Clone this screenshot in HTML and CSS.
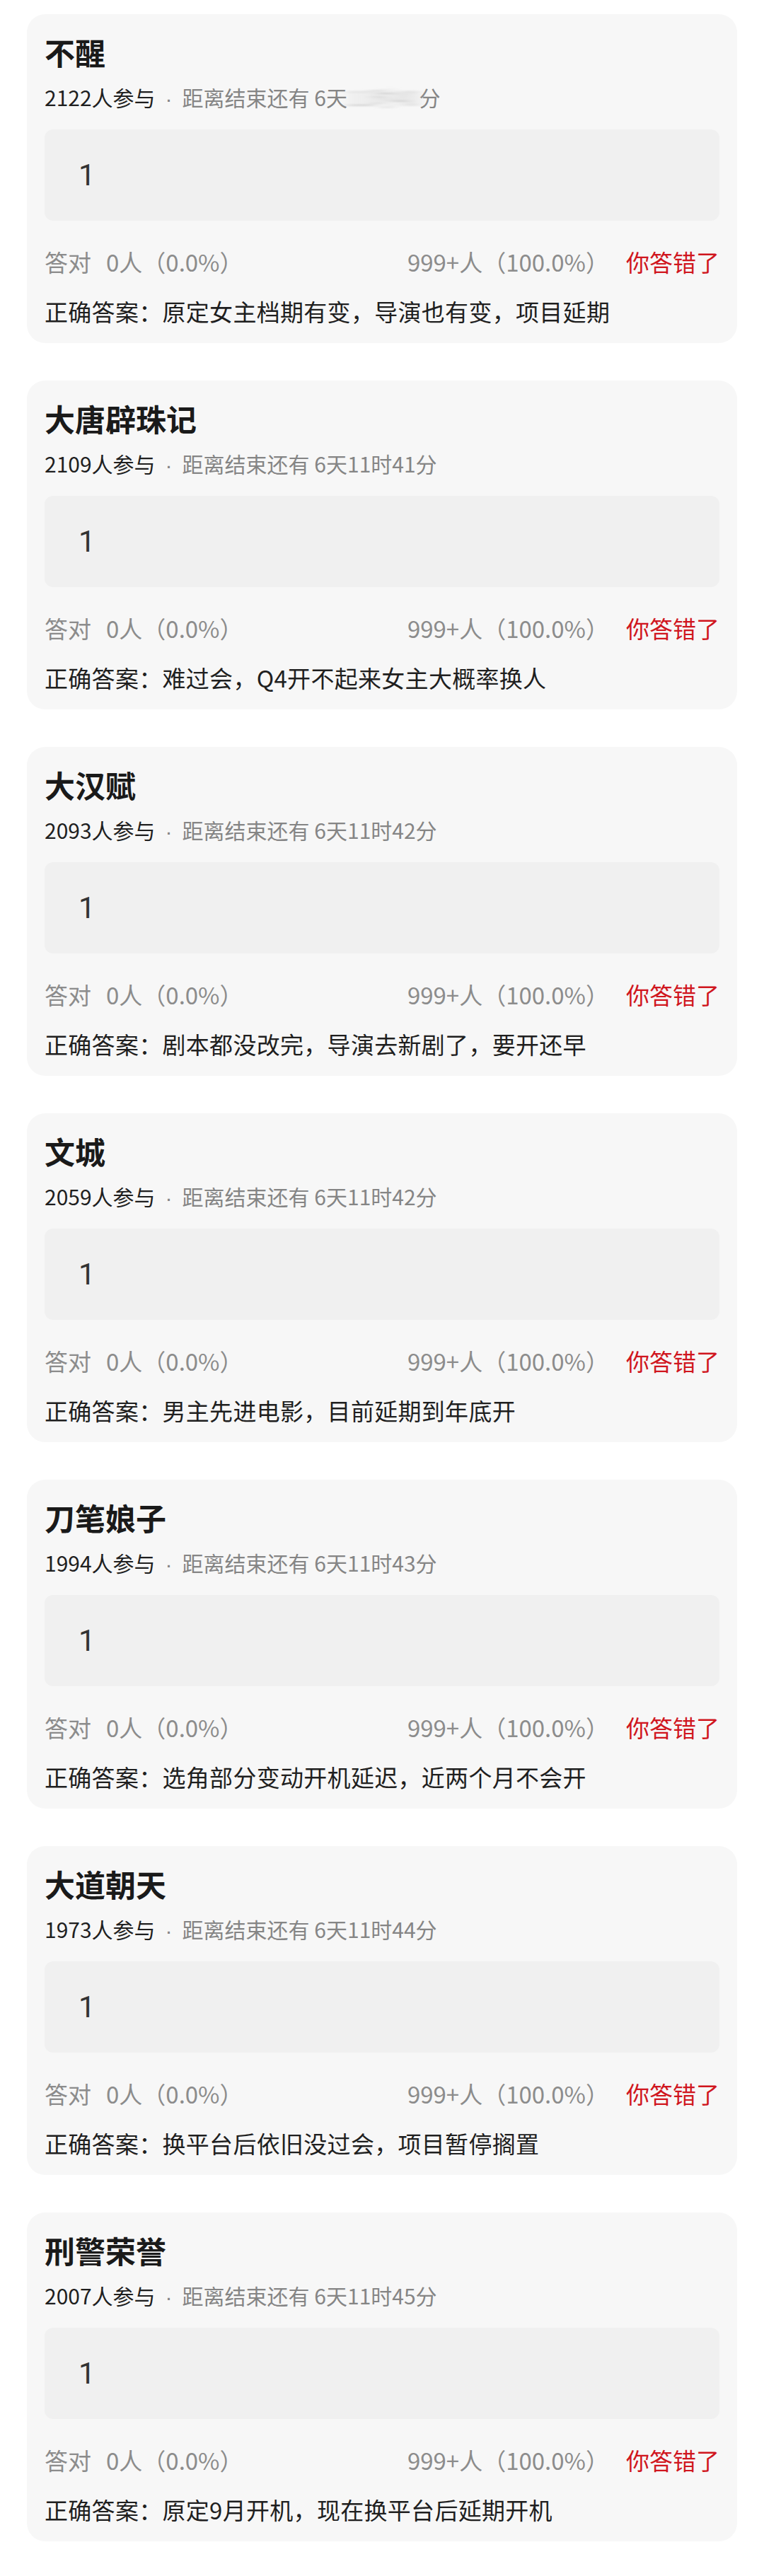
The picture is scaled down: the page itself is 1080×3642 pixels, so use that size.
FILE: index.html
```html
<!DOCTYPE html>
<html lang="zh-CN">
<head>
    <meta charset="UTF-8">
    <meta name="viewport" content="width=device-width, initial-scale=1.0">
    <title>竞猜结果</title>
    <link rel="stylesheet" href="styles.css">
</head>
<body>
    <!-- horizontal smear used on the hidden countdown -->
    <svg class="defs" width="0" height="0">
        <filter id="smear" x="-20%" y="-50%" width="140%" height="200%">
            <feGaussianBlur stdDeviation="9 1.2"/>
        </filter>
    </svg>

    <div class="list">
        <div class="card">
            <h2 class="title">不醒</h2>
            <div class="meta"><span class="count">2122人参与</span><span class="dot">·</span>距离结束还有 6天<span class="smear">11时40</span>分</div>
            <div class="option">1</div>
            <div class="stats">
                <span>答对<span class="num">0人（0.0%）</span></span>
                <span class="wrong-group">999+人（100.0%）<span class="wrong">你答错了</span></span>
            </div>
            <div class="answer">正确答案：原定女主档期有变，导演也有变，项目延期</div>
        </div>

        <div class="card">
            <h2 class="title">大唐辟珠记</h2>
            <div class="meta"><span class="count">2109人参与</span><span class="dot">·</span>距离结束还有 6天11时41分</div>
            <div class="option">1</div>
            <div class="stats">
                <span>答对<span class="num">0人（0.0%）</span></span>
                <span class="wrong-group">999+人（100.0%）<span class="wrong">你答错了</span></span>
            </div>
            <div class="answer">正确答案：难过会，Q4开不起来女主大概率换人</div>
        </div>

        <div class="card">
            <h2 class="title">大汉赋</h2>
            <div class="meta"><span class="count">2093人参与</span><span class="dot">·</span>距离结束还有 6天11时42分</div>
            <div class="option">1</div>
            <div class="stats">
                <span>答对<span class="num">0人（0.0%）</span></span>
                <span class="wrong-group">999+人（100.0%）<span class="wrong">你答错了</span></span>
            </div>
            <div class="answer">正确答案：剧本都没改完，导演去新剧了，要开还早</div>
        </div>

        <div class="card">
            <h2 class="title">文城</h2>
            <div class="meta"><span class="count">2059人参与</span><span class="dot">·</span>距离结束还有 6天11时42分</div>
            <div class="option">1</div>
            <div class="stats">
                <span>答对<span class="num">0人（0.0%）</span></span>
                <span class="wrong-group">999+人（100.0%）<span class="wrong">你答错了</span></span>
            </div>
            <div class="answer">正确答案：男主先进电影，目前延期到年底开</div>
        </div>

        <div class="card">
            <h2 class="title">刀笔娘子</h2>
            <div class="meta"><span class="count">1994人参与</span><span class="dot">·</span>距离结束还有 6天11时43分</div>
            <div class="option">1</div>
            <div class="stats">
                <span>答对<span class="num">0人（0.0%）</span></span>
                <span class="wrong-group">999+人（100.0%）<span class="wrong">你答错了</span></span>
            </div>
            <div class="answer">正确答案：选角部分变动开机延迟，近两个月不会开</div>
        </div>

        <div class="card">
            <h2 class="title">大道朝天</h2>
            <div class="meta"><span class="count">1973人参与</span><span class="dot">·</span>距离结束还有 6天11时44分</div>
            <div class="option">1</div>
            <div class="stats">
                <span>答对<span class="num">0人（0.0%）</span></span>
                <span class="wrong-group">999+人（100.0%）<span class="wrong">你答错了</span></span>
            </div>
            <div class="answer">正确答案：换平台后依旧没过会，项目暂停搁置</div>
        </div>

        <div class="card">
            <h2 class="title">刑警荣誉</h2>
            <div class="meta"><span class="count">2007人参与</span><span class="dot">·</span>距离结束还有 6天11时45分</div>
            <div class="option">1</div>
            <div class="stats">
                <span>答对<span class="num">0人（0.0%）</span></span>
                <span class="wrong-group">999+人（100.0%）<span class="wrong">你答错了</span></span>
            </div>
            <div class="answer">正确答案：原定9月开机，现在换平台后延期开机</div>
        </div>
    </div>
</body>
</html>
```

FILE: styles.css
```css
body {
    margin: 0;
    background: #fff;
    font-family: "Noto Sans CJK SC", "Noto Sans", sans-serif;
    color: #1f1f1f;
}
.defs {
    position: absolute;
}
.list {
    display: flex;
    flex-direction: column;
    gap: 53px;
    padding: 20px 38px;
}
.card {
    background: #f7f7f7;
    border-radius: 26px;
    padding: 32px 25px 28px;
}
.title {
    margin: 0;
    font-size: 43px;
    line-height: 43px;
    font-weight: bold;
    color: #1a1a1a;
}
.meta {
    margin-top: 27px;
    height: 30px;
    font-size: 30px;
    line-height: 30px;
    color: #858585;
    white-space: nowrap;
}
.meta .count {
    color: #1f1f1f;
}
.dot {
    padding: 0 14px;
    font-family: "Liberation Sans", sans-serif;
}
.smear {
    display: inline-block;
    color: #c4c4c4;
    letter-spacing: 1px;
    filter: url(#smear);
}
.option {
    margin-top: 31px;
    height: 129px;
    display: flex;
    align-items: center;
    padding-left: 48px;
    background: #f0f0f0;
    border-radius: 12px;
    font-family: Roboto, sans-serif;
    font-size: 42px;
    color: #333;
}
.stats {
    margin-top: 42px;
    display: flex;
    justify-content: space-between;
    font-size: 33px;
    line-height: 33px;
    color: #8c8c8c;
    white-space: nowrap;
}
.stats .num {
    margin-left: 21px;
}
.wrong {
    margin-left: 24px;
    color: #d0161e;
}
.answer {
    margin-top: 37px;
    font-size: 33px;
    line-height: 33px;
    letter-spacing: 0.3px;
    color: #1f1f1f;
}
```
